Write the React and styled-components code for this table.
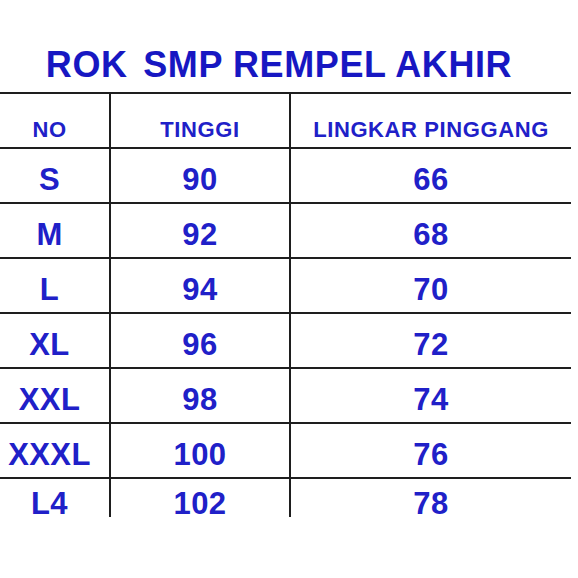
import React from 'react'
import styled, { createGlobalStyle } from 'styled-components'

// size chart data
const rows = [
  { no: 'S', tinggi: '90', lingkar: '66' },
  { no: 'M', tinggi: '92', lingkar: '68' },
  { no: 'L', tinggi: '94', lingkar: '70' },
  { no: 'XL', tinggi: '96', lingkar: '72' },
  { no: 'XXL', tinggi: '98', lingkar: '74' },
  { no: 'XXXL', tinggi: '100', lingkar: '76' },
  { no: 'L4', tinggi: '102', lingkar: '78' },
]

const GlobalStyle = createGlobalStyle`
  html, body {
    margin: 0;
    padding: 0;
    background: #ffffff;
  }
  body {
    font-family: "Liberation Sans", Arial, sans-serif;
    overflow: hidden;
  }
`

const Page = styled.div`
  width: 578px;
  height: 578px;
  overflow: hidden;
  background: #ffffff;
`

const Title = styled.h1`
  margin: 0 0 9px 0;
  padding: 47px 20px 0 0;
  height: 36px;
  font-size: 36px;
  line-height: 36px;
  font-weight: 700;
  color: #1717c2;
  text-align: center;
  letter-spacing: 0.6px;
  white-space: nowrap;

  span {
    margin-right: 5px;
  }
`

const Table = styled.div`
  margin-left: -10px;
  width: 581px;
  border-top: 2px solid #1e1e1e;
`

const Row = styled.div`
  display: grid;
  grid-template-columns: 121px 180px 1fr;
  height: ${(p) => (p.$tail ? '38px' : '55px')};
  box-sizing: border-box;
  border-bottom: ${(p) => (p.$tail ? 'none' : '2px solid #1e1e1e')};
`

const Cell = styled.div`
  box-sizing: border-box;
  border-right: ${(p) => (p.$last ? 'none' : '2px solid #1e1e1e')};
  text-align: center;
  font-weight: 700;
  color: #2020c8;
  font-size: ${(p) => (p.$head ? '22px' : '31px')};
  line-height: ${(p) => (p.$head ? '22px' : p.$tail ? '26px' : '31px')};
  padding-top: ${(p) => (p.$head ? '25px' : p.$tail ? '12px' : '15px')};
  letter-spacing: ${(p) => (p.$head ? '0.6px' : '0.4px')};
  white-space: nowrap;
`

export default function App() {
  return (
    <Page>
      <GlobalStyle />
      <Title>
        <span>ROK</span> SMP REMPEL AKHIR
      </Title>
      <Table>
        <Row>
          <Cell $head>NO</Cell>
          <Cell $head>TINGGI</Cell>
          <Cell $head $last>LINGKAR PINGGANG</Cell>
        </Row>
        {rows.map((r, i) => {
          const tail = i === rows.length - 1
          return (
            <Row key={r.no} $tail={tail}>
              <Cell $tail={tail}>{r.no}</Cell>
              <Cell $tail={tail}>{r.tinggi}</Cell>
              <Cell $tail={tail} $last>{r.lingkar}</Cell>
            </Row>
          )
        })}
      </Table>
    </Page>
  )
}
